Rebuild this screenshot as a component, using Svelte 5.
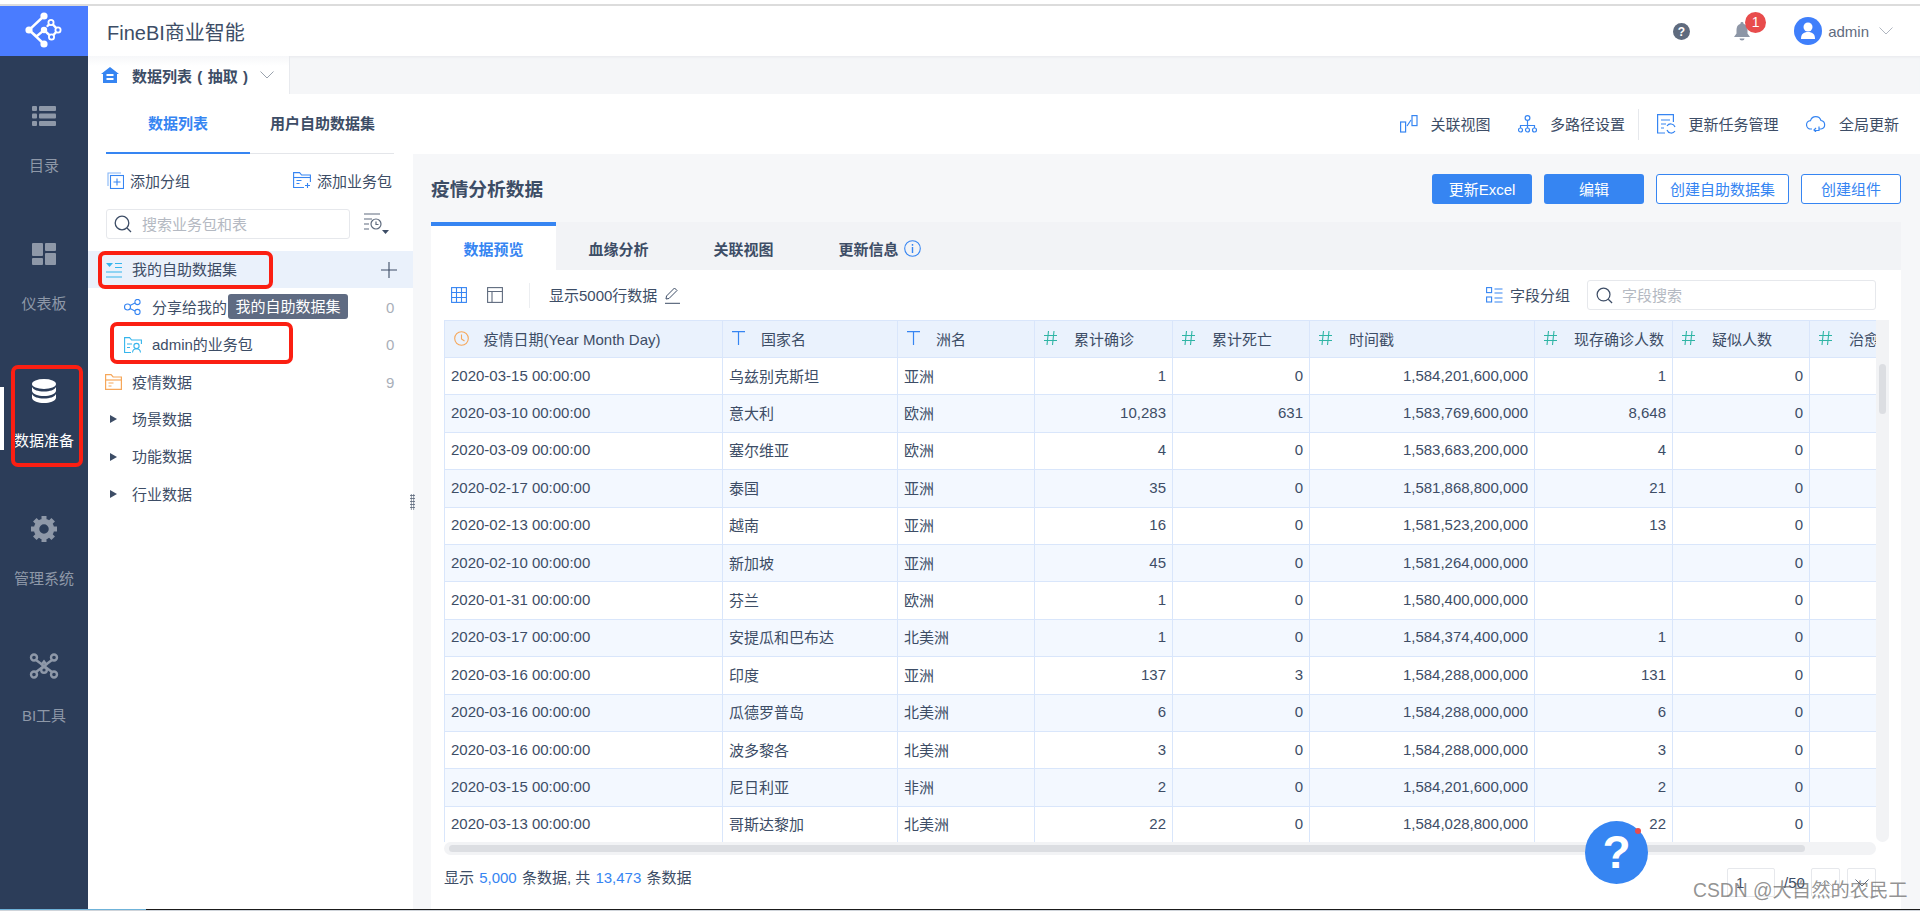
<script>
  const nav = [
    { label: '目录', icon: 'list' },
    { label: '仪表板', icon: 'dash' },
    { label: '数据准备', icon: 'db', active: true },
    { label: '管理系统', icon: 'gear' },
    { label: 'BI工具', icon: 'tool' }
  ];
  const cols = [278, 175, 137, 138, 137, 225, 138, 137, 137];
  const heads = [
    ['clock', '疫情日期(Year Month Day)'], ['T', '国家名'], ['T', '洲名'], ['#', '累计确诊'], ['#', '累计死亡'],
    ['#', '时间戳'], ['#', '现存确诊人数'], ['#', '疑似人数'], ['#', '治愈人数']
  ];
  const rows = [
    ['2020-03-15 00:00:00', '乌兹别克斯坦', '亚洲', '1', '0', '1,584,201,600,000', '1', '0'],
    ['2020-03-10 00:00:00', '意大利', '欧洲', '10,283', '631', '1,583,769,600,000', '8,648', '0'],
    ['2020-03-09 00:00:00', '塞尔维亚', '欧洲', '4', '0', '1,583,683,200,000', '4', '0'],
    ['2020-02-17 00:00:00', '泰国', '亚洲', '35', '0', '1,581,868,800,000', '21', '0'],
    ['2020-02-13 00:00:00', '越南', '亚洲', '16', '0', '1,581,523,200,000', '13', '0'],
    ['2020-02-10 00:00:00', '新加坡', '亚洲', '45', '0', '1,581,264,000,000', '', '0'],
    ['2020-01-31 00:00:00', '芬兰', '欧洲', '1', '0', '1,580,400,000,000', '', '0'],
    ['2020-03-17 00:00:00', '安提瓜和巴布达', '北美洲', '1', '0', '1,584,374,400,000', '1', '0'],
    ['2020-03-16 00:00:00', '印度', '亚洲', '137', '3', '1,584,288,000,000', '131', '0'],
    ['2020-03-16 00:00:00', '瓜德罗普岛', '北美洲', '6', '0', '1,584,288,000,000', '6', '0'],
    ['2020-03-16 00:00:00', '波多黎各', '北美洲', '3', '0', '1,584,288,000,000', '3', '0'],
    ['2020-03-15 00:00:00', '尼日利亚', '非洲', '2', '0', '1,584,201,600,000', '2', '0'],
    ['2020-03-13 00:00:00', '哥斯达黎加', '北美洲', '22', '0', '1,584,028,800,000', '22', '0']
  ];
</script>

<div class="page">
  <div class="topline"></div>
  <div class="shell">
    <aside class="side">
      <div class="logo">
        <svg width="44" height="44" viewBox="0 -1 44 44">
          <g fill="none" stroke="#fff" stroke-width="2.4" stroke-linecap="round">
            <path d="M22 6 L7 20 L22 34 M7 20 L14.500 26.500 L22 20 L29.500 27 L36 20 L29 12.500 L25.500 16" />
          </g>
          <g fill="#fff">
            <circle cx="22" cy="6" r="3.600" /><circle cx="7" cy="20" r="3.600" /><circle cx="22" cy="20" r="3.200" /><circle cx="22" cy="34" r="3.600" />
          </g>
          <g fill="#4a7cff" stroke="#fff" stroke-width="1.800">
            <circle cx="29" cy="12.500" r="2.600" /><circle cx="36" cy="20" r="2.600" /><circle cx="29.500" cy="27" r="2.600" />
          </g>
        </svg>
      </div>
      <nav class="nav">
        {#each nav as item}
          <div class="nav-item" class:on={item.active}>
            <div class="nav-icon">
              {#if item.icon === 'list'}
                <svg width="24" height="20" viewBox="0 0 24 20" fill="currentColor"><rect y="0" width="5" height="5" rx="1" /><rect x="7" y="0" width="17" height="5" rx="1" /><rect y="7.500" width="5" height="5" rx="1" /><rect x="7" y="7.500" width="17" height="5" rx="1" /><rect y="15" width="5" height="5" rx="1" /><rect x="7" y="15" width="17" height="5" rx="1" /></svg>
              {:else if item.icon === 'dash'}
                <svg width="24" height="22" viewBox="0 0 24 22" fill="currentColor"><rect width="11" height="13" rx="1" /><rect x="13" width="11" height="8" rx="1" /><rect y="15" width="11" height="7" rx="1" /><rect x="13" y="10" width="11" height="12" rx="1" /></svg>
              {:else if item.icon === 'db'}
                <svg width="24" height="24" viewBox="0 0 24 24" fill="#fff"><ellipse cx="12" cy="5" rx="12" ry="5" /><path d="M0 8c1.500 3 6 4.500 12 4.500S22.500 11 24 8v4c-1 3.500-6 5-12 5S1 15.500 0 12z" /><path d="M0 15c1.500 3 6 4.500 12 4.500S22.500 18 24 15v4c-1 3.500-6 5-12 5S1 22.500 0 19z" /></svg>
              {:else if item.icon === 'gear'}
                <svg width="26" height="26" viewBox="0 0 26 26" fill="none"><circle cx="13" cy="13" r="7.500" stroke="currentColor" stroke-width="5.500" /><g stroke="currentColor" stroke-width="5"><path d="M13 0v4M13 22v4M0 13h4M22 13h4M3.800 3.800l2.800 2.800M19.400 19.400l2.800 2.800M3.800 22.200l2.800-2.800M19.400 6.600l2.800-2.800" /></g></svg>
              {:else}
                <svg width="30" height="26" viewBox="0 0 30 26" fill="none" stroke="currentColor" stroke-width="2.400"><circle cx="5" cy="4.500" r="3" /><circle cx="25" cy="4.500" r="3" /><circle cx="5" cy="21.500" r="3" /><circle cx="25" cy="21.500" r="3" /><circle cx="15" cy="17" r="2.800" /><path d="M7 7l16 12M23 7L7 19M12 12.500l3-4 3 4" /></svg>
              {/if}
            </div>
            <div class="nav-label">{item.label}</div>
          </div>
        {/each}
      </nav>
      <span class="active-bar"></span>
      <span class="mark mark-nav"></span>
    </aside>

    <main class="main">
      <header class="head">
        <div class="brand">FineBI商业智能</div>
        <div class="head-right">
          <svg class="qm" width="17" height="17" viewBox="0 0 17 17"><circle cx="8.500" cy="8.500" r="8.500" fill="#5f6b7e" /><text x="8.500" y="13" text-anchor="middle" font-size="12" font-weight="700" fill="#fff" font-family="Liberation Sans">?</text></svg>
          <div class="bell">
            <svg width="16" height="19" viewBox="0 0 16 19" fill="#8d96a6"><path d="M8 0a1.500 1.500 0 0 1 1.500 1.700C12.500 2.500 13.500 5 13.500 8v3.500L16 15H0l2.500-3.500V8c0-3 1-5.500 4-6.300A1.500 1.500 0 0 1 8 0z" /><path d="M5.500 16.500h5a2.500 2 0 0 1-5 0z" /></svg>
            <span class="badge">1</span>
          </div>
          <div class="avatar">
            <svg width="16" height="18" viewBox="0 0 16 18" fill="#fff"><circle cx="8" cy="5" r="4.500" /><path d="M1 17c0-5 2.500-7 7-7s7 2 7 7z" /></svg>
          </div>
          <span class="uname">admin</span>
          <svg width="14" height="8" viewBox="0 0 14 8" fill="none" stroke="#b0b6c0" stroke-width="1"><path d="M0.500 0.500L7 7l6.500-6.500" /></svg>
        </div>
      </header>

      <div class="tabbar">
        <div class="tabbar-tab">
          <svg width="18" height="16" viewBox="0 0 18 16"><path d="M9 0L18 7h-2v9H2V7H0z" fill="#3685f2" /><rect x="5.500" y="7" width="7" height="2" fill="#fff" /><rect x="5.500" y="11" width="7" height="2" fill="#fff" /></svg>
          <span class="tabbar-text">数据列表 ( 抽取 )</span>
          <svg class="tabbar-chev" width="14" height="8" viewBox="0 0 14 8" fill="none" stroke="#9aa2ad" stroke-width="1"><path d="M0.500 0.500L7 7l6.500-6.500" /></svg>
        </div>
      </div>

      <div class="subnav">
        <div class="subtabs">
          <div class="subtab on">数据列表</div>
          <div class="subtab">用户自助数据集</div>
        </div>
        <div class="tools">
          <div class="tool">
            <svg width="18" height="18" viewBox="0 0 18 18" fill="none" stroke="#3685f2" stroke-width="1.200"><rect x="0.600" y="7" width="5" height="10" /><rect x="12" y="0.600" width="5" height="10" /><path d="M7 11L11 5" /></svg>
            <span>关联视图</span>
          </div>
          <div class="tool">
            <svg width="19" height="18" viewBox="0 0 19 18" fill="none" stroke="#3685f2" stroke-width="1.200"><circle cx="9.500" cy="3" r="2.400" /><circle cx="2.500" cy="15" r="2" /><circle cx="9.500" cy="15" r="2" /><circle cx="16.500" cy="15" r="2" /><path d="M9.500 5.500V13M2.500 13v-2.500h14V13" /></svg>
            <span>多路径设置</span>
          </div>
          <span class="tool-div"></span>
          <div class="tool">
            <svg width="19" height="20" viewBox="0 0 19 20" fill="none" stroke="#3685f2" stroke-width="1.200"><path d="M8 19H0.600V0.600h15.800V8" /><path d="M4 6h9M4 10h5M4 14h3" /><path d="M18 13a4.500 4.500 0 0 0-8-1M10 16a4.500 4.500 0 0 0 8 1" /></svg>
            <span>更新任务管理</span>
          </div>
          <div class="tool">
            <svg width="20" height="16" viewBox="0 0 20 16" fill="none" stroke="#3685f2" stroke-width="1.200"><path d="M6 13H5a4.200 4.200 0 0 1-.5-8.400A5.500 5.500 0 0 1 15 4.500 4.300 4.300 0 0 1 15 13h-2" /><path d="M13 10.500v4H8M10 12l-2 2 2 2" /></svg>
            <span>全局更新</span>
          </div>
        </div>
      </div>

      <div class="content">
        <section class="tree">
          <div class="tree-actions">
            <div class="tree-act">
              <svg width="17" height="17" viewBox="0 0 17 17" fill="none" stroke="#3685f2" stroke-width="1.100"><path d="M1 14V1h13" opacity=".6" /><rect x="3.500" y="3.500" width="13" height="13" /><path d="M10 6.500v7M6.500 10h7" /></svg>
              <span>添加分组</span>
            </div>
            <div class="tree-act">
              <svg width="18" height="16" viewBox="0 0 18 16" fill="none" stroke="#3685f2" stroke-width="1.100"><path d="M11 15.500H0.600V0.600h6l2 2.400h8.800v7" /><path d="M0.600 5.500h16.800" /><path d="M3.500 8.500h5M3.500 11.500h3" /><path d="M14.500 11v5M12 13.500h5" /></svg>
              <span>添加业务包</span>
            </div>
          </div>
          <div class="tree-search">
            <div class="searchbox">
              <svg width="18" height="18" viewBox="0 0 18 18" fill="none" stroke="#3d4d66" stroke-width="1.300"><circle cx="8" cy="8" r="6.800" /><path d="M13 13l4 4" /></svg>
              <span>搜索业务包和表</span>
            </div>
            <svg class="filt" width="26" height="22" viewBox="0 0 26 22" fill="none" stroke="#5f6b7e" stroke-width="1.200"><path d="M1 1h16M1 6h8M1 11h5M1 16h5" /><circle cx="13" cy="11" r="5" /><path d="M13 8.500V11.500h2.500" /><path d="M19 17h7l-3.500 4z" fill="#3d4d66" stroke="none" /></svg>
          </div>

          <div class="rows">
            <div class="row sel">
              <svg class="ri" width="16" height="16" viewBox="0 0 16 16" fill="none" stroke="#35b5ec" stroke-width="1.200"><path d="M0 1h7L3.500 5z" fill="#35b5ec" stroke="none" /><path d="M9 1.500h7M9 5.500h7M0 10h16M0 15h16" /></svg>
              <span class="rt">我的自助数据集</span>
              <svg class="plus" width="16" height="16" viewBox="0 0 16 16" stroke="#3d4d66" stroke-width="1.100"><path d="M8 0v16M0 8h16" /></svg>
            </div>
            <div class="row sub">
              <svg class="ri" width="18" height="16" viewBox="0 0 18 16" fill="none" stroke="#3685f2" stroke-width="1.100"><circle cx="3.500" cy="8" r="3" /><circle cx="13.500" cy="3" r="2.600" /><circle cx="13.500" cy="13" r="2.600" /><path d="M6 6.500L11 4M6 9.500l5 2.500" /></svg>
              <span class="rt">分享给我的</span>
              <span class="count">0</span>
              <span class="tip">我的自助数据集</span>
            </div>
            <div class="row sub">
              <svg class="ri" width="18" height="16" viewBox="0 0 18 16" fill="none" stroke="#35b5ec" stroke-width="1.100"><path d="M7 15.500H0.600V0.600h5l2 2.400h9.800v4" /><path d="M3 7h5M3 10.500h3" /><circle cx="12.500" cy="9" r="2.600" /><path d="M8.500 15.500c.3-2.600 2-3.700 4-3.700s3.700 1.100 4 3.700" /></svg>
              <span class="rt">admin的业务包</span>
              <span class="count">0</span>
            </div>
            <div class="row">
              <svg class="ri" width="17" height="16" viewBox="0 0 17 16" fill="none" stroke="#f6a75a" stroke-width="1.200"><path d="M0.600 15.400V0.600h5.500l2 2.400h8.300v12.400z" /><path d="M0.600 6h15.800" /><path d="M3.500 9h5M3.500 12h3" /></svg>
              <span class="rt">疫情数据</span>
              <span class="count">9</span>
            </div>
            {#each ['场景数据', '功能数据', '行业数据'] as g}
              <div class="row">
                <span class="tri"></span>
                <span class="rt">{g}</span>
              </div>
            {/each}
          </div>
          <span class="mark mark-a"></span>
          <span class="mark mark-b"></span>
          <span class="grip"></span>
        </section>

        <section class="detail">
          <div class="detail-head">
            <h1>疫情分析数据</h1>
            <div class="btns">
              <button class="btn solid">更新Excel</button>
              <button class="btn solid">编辑</button>
              <button class="btn line wide">创建自助数据集</button>
              <button class="btn line">创建组件</button>
            </div>
          </div>
          <div class="dtabs">
            <div class="dtab on">数据预览</div>
            <div class="dtab">血缘分析</div>
            <div class="dtab">关联视图</div>
            <div class="dtab">更新信息
              <svg width="17" height="17" viewBox="0 0 17 17" fill="none" stroke="#3685f2" stroke-width="1.100"><circle cx="8.500" cy="8.500" r="7.800" /><path d="M8.500 7v6M8.500 4v1.800" stroke-width="1.400" /></svg>
            </div>
          </div>
          <div class="card">
            <div class="bar">
              <svg width="16" height="16" viewBox="0 0 16 16" fill="none" stroke="#3685f2" stroke-width="1.100"><rect x="0.600" y="0.600" width="14.800" height="14.800" /><path d="M5.500 0.600v14.800M10.500 0.600v14.800M0.600 5.500h14.800M0.600 10.500h14.800" /></svg>
              <svg class="ml" width="16" height="16" viewBox="0 0 16 16" fill="none" stroke="#5f6b7e" stroke-width="1.100"><rect x="0.600" y="0.600" width="14.800" height="14.800" /><path d="M0.600 4.500h14.800M5 4.500v11" /></svg>
              <span class="bar-div"></span>
              <span class="bar-text">显示5000行数据</span>
              <svg class="pen" width="15" height="17" viewBox="0 0 15 17" fill="none" stroke="#3d4d66" stroke-width="1"><path d="M1 12l0.500-3L9.500 1l2.500 2.500-8 8z" /><path d="M0 16.300h15" /></svg>
              <span class="bar-fill"></span>
              <svg width="17" height="16" viewBox="0 0 17 16" fill="none" stroke="#3685f2" stroke-width="1.100"><rect x="0.600" y="0.600" width="5" height="5" /><rect x="0.600" y="10" width="5" height="5" /><path d="M8.500 2h8M8.500 6h8M8.500 11h8M8.500 15h8" /></svg>
              <span class="bar-text grp">字段分组</span>
              <div class="fsearch">
                <svg width="17" height="17" viewBox="0 0 18 18" fill="none" stroke="#3d4d66" stroke-width="1.300"><circle cx="8" cy="8" r="6.800" /><path d="M13 13l4 4" /></svg>
                <span>字段搜索</span>
              </div>
            </div>

            <div class="tablewrap">
              <div class="tablebox">
                <table>
                  <colgroup>
                    {#each cols as w}<col style="width:{w}px" />{/each}
                  </colgroup>
                  <thead>
                    <tr>
                      {#each heads as h, i}
                        <th>
                          <span class="hcell">
                            {#if h[0] === 'clock'}
                              <svg class="hi-clock" width="15" height="15" viewBox="0 0 15 15" fill="none" stroke="#f6a75a" stroke-width="1.100"><circle cx="7.500" cy="7.500" r="6.800" /><path d="M7.500 3.500V8l3 2" /></svg>
                            {:else if h[0] === 'T'}
                              <svg class="hi-t" width="13" height="14" viewBox="0 0 13 14" fill="none" stroke="#3685f2" stroke-width="1.200"><path d="M0 0.700h13M6.500 0.700V14" /></svg>
                            {:else}
                              <svg width="13" height="14" viewBox="0 0 13 14" fill="none" stroke="#2fb5a5" stroke-width="1.100"><path d="M4.500 0L3 14M10 0L8.500 14M0 4.500h13M0 9.500h13" /></svg>
                            {/if}
                            <span>{h[1]}</span>
                          </span>
                        </th>
                      {/each}
                    </tr>
                  </thead>
                  <tbody>
                    {#each rows as r}
                      <tr>
                        {#each r as v, i}
                          <td class:num={i > 2}>{v}</td>
                        {/each}
                        <td></td>
                      </tr>
                    {/each}
                  </tbody>
                </table>
              </div>
              <div class="vscroll"><span></span></div>
            </div>
            <div class="hscroll"><span></span></div>

            <div class="foot">
              <span>显示 <b>5,000</b> 条数据, 共 <b>13,473</b> 条数据</span>
              <div class="pager">
                <span class="pinput">1</span>
                <span class="ptotal">/50</span>
                <span class="pbtn"><svg width="14" height="8" viewBox="0 0 14 8" fill="none" stroke="#c9cdd3" stroke-width="1"><path d="M0.500 7.500L7 1l6.500 6.500" /></svg></span>
                <span class="pbtn"><svg width="14" height="8" viewBox="0 0 14 8" fill="none" stroke="#5f6b7e" stroke-width="1"><path d="M0.500 0.500L7 7l6.500-6.500" /></svg></span>
              </div>
            </div>
          </div>
        </section>
      </div>
    </main>
  </div>
  <div class="bottomline"></div>
  <div class="helpfab">?<i></i></div>
  <div class="wm">CSDN @大自然的农民工</div>
</div>

<style>
  :global(body) { margin: 0; }
  .page {
    position: relative;
    width: 1920px;
    height: 911px;
    display: flex;
    flex-direction: column;
    overflow: hidden;
    background: #fff;
    color: #3d4d66;
    font-family: "Liberation Sans", "Noto Sans CJK SC", sans-serif;
    font-size: 15px;
  }
  .topline { height: 2px; margin-top: 4px; background: #dcdcdc; flex: none; }
  .shell { flex: 1; min-height: 0; display: flex; }
  .bottomline { height: 2px; flex: none; background: linear-gradient(90deg, #6fb3d9 146px, #1a1a1a 146px) top / 100% 1px no-repeat, #cfd4da; }

  .side { position: relative; width: 88px; flex: none; background: #2c3d59; }
  .logo { height: 50px; background: #4a7cff; display: flex; align-items: center; justify-content: center; }
  .nav { display: flex; flex-direction: column; padding-top: 48px; }
  .nav-item { height: 137.500px; display: flex; flex-direction: column; align-items: center; color: #8e98a8; box-sizing: border-box; }
  .nav-item.on { color: #fff; }
  .nav-icon { height: 24px; display: flex; align-items: center; justify-content: center; }
  .nav-label { margin-top: 26px; line-height: 24px; font-size: 15px; white-space: nowrap; }
  .active-bar { position: absolute; left: 0; top: 381px; width: 4px; height: 63px; background: #fff; }

  .mark { position: absolute; border: 4px solid #fb1f12; border-radius: 7px; box-sizing: border-box; pointer-events: none; z-index: 3; }
  .mark-nav { left: 11px; top: 359px; width: 72px; height: 102px; }
  .mark-a { left: 10px; top: 97px; width: 175px; height: 38px; }
  .mark-b { left: 22px; top: 168px; width: 183px; height: 42px; }

  .main { flex: 1; min-width: 0; display: flex; flex-direction: column; }
  .head { height: 50px; flex: none; display: flex; align-items: center; justify-content: space-between; padding: 0 27px 0 19px; }
  .brand { font-size: 20px; color: #3d4d66; }
  .head-right { display: flex; align-items: center; }
  .qm { margin-right: 44px; }
  .bell { position: relative; width: 16px; height: 19px; margin-right: 44px; }
  .bell svg { display: block; }
  .badge { position: absolute; left: 11px; top: -10px; width: 21px; height: 21px; border-radius: 50%; background: #e84c4c; color: #fff; font-size: 14px; line-height: 21px; text-align: center; }
  .avatar { width: 28px; height: 28px; border-radius: 50%; background: #3f7ffb; display: flex; align-items: center; justify-content: center; margin-right: 6px; }
  .uname { color: #5f6b7e; font-size: 15px; margin-right: 10px; }

  .tabbar { height: 38px; flex: none; background: #f5f6f8; box-shadow: inset 0 3px 3px -2px #e6e8ec; }
  .tabbar-tab { width: 202px; height: 38px; box-sizing: border-box; border-right: 1px solid #e8eaee; background: linear-gradient(#f6f7f9, #fff 10px); display: flex; align-items: center; padding-left: 13px; }
  .tabbar-text { margin-left: 13px; font-weight: 700; white-space: nowrap; font-size: 15px; word-spacing: 1.200px; }
  .tabbar-chev { margin-left: 12px; }

  .subnav { height: 60px; flex: none; background: #fff; display: flex; justify-content: space-between; padding-left: 18px; padding-right: 21px; }
  .subtabs { width: 288px; height: 60px; box-sizing: border-box; border-bottom: 1px solid #e4e6ea; display: flex; }
  .subtab { font-weight: 700; line-height: 60px; height: 60px; box-sizing: border-box; padding-left: 20px; white-space: nowrap; }
  .subtab.on { width: 144px; padding-left: 0; text-align: center; color: #3685f2; border-bottom: 2px solid #3685f2; }
  .tools { display: flex; align-items: center; gap: 28px; height: 60px; }
  .tool { display: flex; align-items: center; gap: 12.500px; white-space: nowrap; }
  .tool span { margin-bottom: 2px; }
  .tool-div { width: 1px; height: 31px; background: #e6e8ec; margin: 0 -10px 0 -15px; }

  .content { flex: 1; min-height: 0; display: flex; }
  .tree { position: relative; width: 325px; flex: none; background: #fff; }
  .tree-actions { display: flex; justify-content: space-between; align-items: center; padding: 0 21px 0 19px; height: 52px; margin-bottom: 3px; }
  .tree-act { display: flex; align-items: center; gap: 6px; white-space: nowrap; }
  .tree-search { display: flex; align-items: center; padding-left: 18px; }
  .searchbox { width: 244px; height: 30px; box-sizing: border-box; border: 1px solid #e6e8ec; border-radius: 3px; display: flex; align-items: center; padding-left: 7px; gap: 10px; color: #b4b9c2; }
  .searchbox span { margin-bottom: 2px; }
  .filt { margin-left: 13px; }
  .rows { margin-top: 12px; }
  .row { position: relative; height: 37.450px; display: flex; align-items: center; padding-left: 17px; white-space: nowrap; }
  .row.sel { background: #eaf1fb; }
  .ri { flex: none; margin-right: 10px; }
  .row.sub { padding-left: 36px; }
  .row.sel .ri { margin-left: 1px; }
  .rt { flex: none; margin-bottom: 2px; }
  .plus { position: absolute; left: 293px; top: 11px; }
  .count { position: absolute; left: 298px; color: #a9afb9; }
  .tri { width: 0; height: 0; border-left: 7px solid #3d4d66; border-top: 4.500px solid transparent; border-bottom: 4.500px solid transparent; margin: 0 15px 0 5px; }
  .tip { position: absolute; left: 140px; top: 6px; width: 120px; height: 25px; border-radius: 3px; background: #5f6b82; color: #fff; text-align: center; line-height: 25px; font-size: 15px; }
  .grip { position: absolute; right: -2px; top: 340px; width: 5px; height: 16px; background-image: radial-gradient(#5f6b7e 0.800px, transparent 1px); background-size: 2.500px 3px; }

  .detail { flex: 1; min-width: 0; background: #f6f7f9; display: flex; flex-direction: column; padding: 0 19px 0 18px; }
  .detail-head { height: 68px; flex: none; display: flex; align-items: center; justify-content: space-between; }
  h1 { margin: 0 0 2px; font-size: 18.700px; font-weight: 700; color: #3d4d66; }
  .btns { display: flex; gap: 12px; margin-top: 1px; }
  .btn { width: 100px; height: 30px; border-radius: 3px; font: inherit; padding: 0; box-sizing: border-box; white-space: nowrap; }
  .btn.wide { width: 133px; }
  .btn.solid { background: #3685f2; color: #fff; border: 0; }
  .btn.line { background: #fff; color: #3685f2; border: 1px solid #3685f2; }

  .dtabs { height: 48px; flex: none; display: flex; background: #f2f3f6; }
  .dtab { width: 125px; box-sizing: border-box; padding-top: 5px; font-weight: 700; display: flex; align-items: center; justify-content: center; white-space: nowrap; position: relative; }
  .dtab svg { margin-left: 5px; margin-right: -22px; }
  .dtab.on { background: #fff; color: #3685f2; border-top: 4px solid #3685f2; padding-top: 1px; }

  .card { flex: 1; min-height: 0; background: #fff; padding: 0 25px 0 13px; display: flex; flex-direction: column; }
  .bar { height: 50px; flex: none; display: flex; align-items: center; padding-left: 7px; }
  .bar svg { flex: none; }
  .ml { margin-left: 20px; }
  .bar-div { width: 1px; height: 25px; background: #eceef1; margin: 0 19px 0 26px; }
  .bar-text { white-space: nowrap; margin-bottom: 2px; }
  .pen { margin-left: 8px; }
  .bar-fill { flex: 1; }
  .grp { margin-left: 7px; }
  .fsearch { width: 289px; height: 30px; box-sizing: border-box; margin-left: 17px; border: 1px solid #e6e8ec; border-radius: 3px; display: flex; align-items: center; gap: 9px; padding-left: 8px; color: #b4b9c2; }
  .fsearch span { margin-bottom: 2px; }

  .tablewrap { display: flex; height: 522px; flex: none; width: 1445px; }
  .tablebox { width: 1432px; height: 522px; overflow: hidden; flex: none; }
  table { border-collapse: collapse; table-layout: fixed; width: 1502px; }
  th { height: 37px; padding: 0 0 2px; background: #eaf2fd; border: 1px solid #d9e6fb; text-align: left; font-weight: 400; white-space: nowrap; overflow: hidden; box-sizing: border-box; }
  .hcell { display: flex; align-items: center; padding-left: 9px; gap: 17px; }
  .hcell span { color: #3d4d66; }
  .hi-clock { margin-right: -2.500px; }
  .hi-t { margin-right: -1px; }
  td { height: 37.400px; padding: 0 6px 2px; border: 1px solid #d9e6fb; white-space: nowrap; overflow: hidden; box-sizing: border-box; color: #3d4d66; }
  td.num { text-align: right; }
  tbody tr:nth-child(even) td { background: #f3f8ff; }
  .vscroll { width: 13px; height: 522px; background: #f2f3f5; border-radius: 0 0 7px 7px; position: relative; flex: none; }
  .vscroll span { position: absolute; left: 3px; top: 44px; width: 7px; height: 50px; border-radius: 4px; background: #dcdee2; }
  .hscroll { width: 1432px; height: 13px; background: #f2f3f5; border-radius: 7px; flex: none; position: relative; }
  .hscroll span { position: absolute; left: 5px; top: 3px; width: 1356px; height: 7px; border-radius: 4px; background: #dcdee2; }

  .foot { flex: 1; display: flex; align-items: flex-start; justify-content: space-between; width: 1432px; position: relative; }
  .foot > span { margin-top: 13px; line-height: 20px; }
  .foot b { font-weight: 400; color: #3685f2; margin: 0 1px; }
  .pager { display: flex; align-items: center; margin-top: 13px; }
  .pinput { width: 48px; height: 29px; box-sizing: border-box; border: 1px solid #e6e8ec; border-radius: 2px; line-height: 27px; padding-left: 8px; }
  .ptotal { width: 29px; padding-left: 9px; box-sizing: border-box; }
  .pbtn { width: 29px; height: 29px; box-sizing: border-box; border: 1px solid #e6e8ec; border-radius: 2px; display: flex; align-items: center; justify-content: center; margin-left: 7px; }

  .helpfab { position: absolute; left: 1585px; top: 821px; width: 63px; height: 63px; border-radius: 50%; background: #3685f2; color: #fff; font-size: 46px; font-weight: 700; line-height: 63px; text-align: center; z-index: 4; }
  .helpfab i { position: absolute; left: 50px; top: 7px; width: 6px; height: 6px; border-radius: 50%; background: #e84c4c; }
  .wm { position: absolute; left: 1693px; top: 878px; font-size: 19.300px; line-height: 26px; color: rgba(100, 100, 100, 0.7); white-space: nowrap; z-index: 5; }
</style>
